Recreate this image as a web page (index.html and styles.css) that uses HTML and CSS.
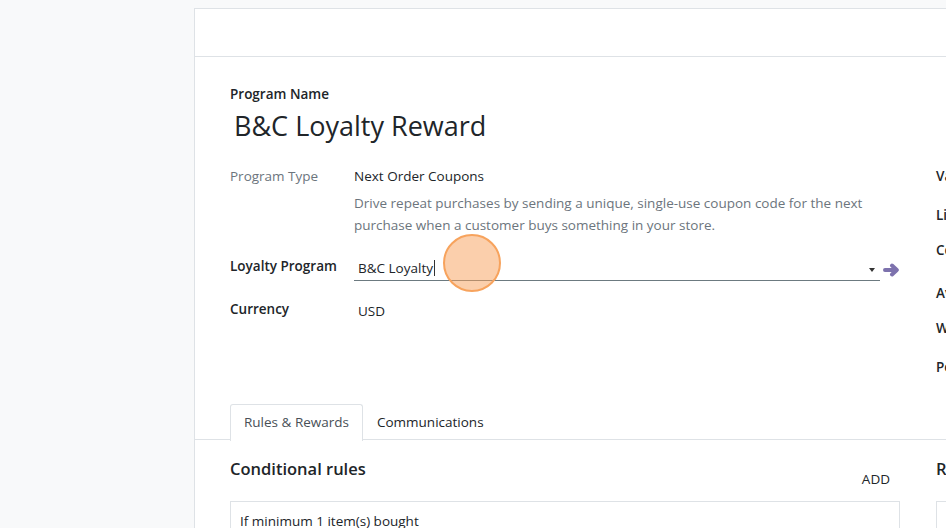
FILE: index.html
```html
<!DOCTYPE html>
<html>
<head>
<meta charset="utf-8">
<link rel="stylesheet" href="styles.css">
</head>
<body>
<div class="page">
  <div class="sheet">
    <div class="sheet-head"></div>
    <div class="sheet-body">
      <div class="name-label">Program Name</div>
      <div class="title">B&amp;C Loyalty Reward</div>
      <div class="groups">
        <div class="group-left">
          <div class="row row-type">
            <div class="lbl lbl-muted">Program Type</div>
            <div class="val">
              <div>Next Order Coupons</div>
              <div class="desc">Drive repeat purchases by sending a unique, single-use coupon code for the next purchase when a customer buys something in your store.</div>
            </div>
          </div>
          <div class="row row-loyalty">
            <div class="lbl">Loyalty Program</div>
            <div class="val val-input">
              <div class="input">
                <span class="input-text">B&amp;C Loyalty</span><span class="caret-cursor"></span>
                <span class="dd"></span>
              </div>
              <svg class="ext" width="18" height="14" viewBox="0 0 18 14"><path d="M2 7h11.5M9 2.5l4.8 4.5-4.8 4.5" fill="none" stroke="#7d72ad" stroke-width="4" stroke-linecap="round" stroke-linejoin="round"/></svg>
            </div>
          </div>
          <div class="row row-cur">
            <div class="lbl">Currency</div>
            <div class="val val-pad">USD</div>
          </div>
        </div>
        <div class="group-right">
          <div class="rlbl r1">Validity</div>
          <div class="rlbl r2">Limit Usage</div>
          <div class="rlbl r3">Company</div>
          <div class="rlbl r4">Available On</div>
          <div class="rlbl r5">Website</div>
          <div class="rlbl r6">Pe</div>
        </div>
      </div>
      <div class="tabs">
        <div class="tab active">Rules &amp; Rewards</div>
        <div class="tab">Communications</div>
      </div>
      <div class="panes">
        <div class="pane-left">
          <div class="pane-head">
            <div class="pane-title">Conditional rules</div>
            <div class="add">ADD</div>
          </div>
          <div class="card">If minimum 1 item(s) bought</div>
        </div>
        <div class="pane-right">
          <div class="pane-head">
            <div class="pane-title">Rewards</div>
          </div>
          <div class="card"></div>
        </div>
      </div>
    </div>
  </div>
  <div class="click-dot"></div>
</div>
</body>
</html>
```

FILE: styles.css
```css
html, body {
  margin: 0;
  padding: 0;
  width: 946px;
  height: 528px;
  overflow: hidden;
}
body {
  font-family: "Open Sans", "Noto Sans", sans-serif;
  font-size: 13.5px;
  color: #212529;
  background: #f8f9fa;
}
.page {
  position: relative;
  padding: 8px 0 0 194px;
  height: 520px;
}
.sheet {
  width: 1100px;
  height: 520px;
  background: #fff;
  border-left: 1px solid #dee2e6;
  border-top: 1px solid #dee2e6;
}
.sheet-head {
  height: 47px;
  border-bottom: 1px solid #dee2e6;
}
.sheet-body {
  padding: 27px 0 0 35px;
}
.name-label {
  font-weight: 600;
  line-height: 20px;
  height: 20px;
}
.title {
  margin-top: 4px;
  padding-left: 4px;
  font-size: 27px;
  line-height: 36px;
  height: 36px;
}
.groups {
  display: flex;
  margin-top: 22px;
  height: 211px;
}
.group-left {
  width: 672px;
}
.group-right {
  margin-left: 34px;
  display: flex;
  flex-direction: column;
}
.row {
  display: flex;
}
.lbl {
  width: 124px;
  flex: none;
  font-weight: 600;
  line-height: 20px;
}
.lbl-muted {
  font-weight: 400;
  color: #6c757d;
}
.val {
  flex: 1;
  line-height: 20px;
}
.desc {
  margin-top: 6px;
  line-height: 22px;
  color: #6c757d;
  width: 530px;
}
.row-loyalty {
  margin-top: 20px;
}
.val-input {
  display: flex;
  align-items: flex-start;
}
.input {
  position: relative;
  width: 522px;
  height: 24px;
  border-bottom: 1px solid #6c7a80;
  padding-left: 4px;
  display: flex;
  align-items: center;
}
.input-text {
  line-height: 20px;
}
.caret-cursor {
  display: inline-block;
  width: 1px;
  height: 16px;
  background: #333;
  margin-left: 1px;
}
.dd {
  position: absolute;
  right: 5px;
  top: 12px;
  width: 0;
  height: 0;
  border-left: 3.5px solid transparent;
  border-right: 3.5px solid transparent;
  border-top: 4px solid #333;
}
.ext {
  margin: 7px 0 0 3px;
}
.row-cur {
  margin-top: 18px;
}
.val-pad {
  padding-left: 4px;
  padding-top: 2px;
}
.rlbl {
  font-weight: 600;
  line-height: 20px;
  white-space: nowrap;
}
.r2 { margin-top: 19px; }
.r3 { margin-top: 15px; }
.r4 { margin-top: 23px; }
.r5 { margin-top: 15px; }
.r6 { margin-top: 19px; }
.tabs {
  display: flex;
  margin-top: 27px;
  margin-left: -35px;
  padding-left: 35px;
  border-bottom: 1px solid #dee2e6;
  height: 35px;
}
.tab {
  padding: 0 13px;
  line-height: 35px;
  height: 35px;
  border: 1px solid transparent;
  border-bottom: none;
  color: #212529;
}
.tab.active {
  border-color: #dee2e6;
  border-radius: 3px 3px 0 0;
  color: #495057;
  background: #fff;
  height: 36px;
}
.panes {
  display: flex;
  margin-top: 17px;
}
.pane-left {
  width: 670px;
}
.pane-right {
  margin-left: 36px;
  width: 300px;
}
.pane-head {
  display: flex;
  justify-content: space-between;
  height: 44px;
}
.pane-title {
  font-size: 16.5px;
  font-weight: 600;
  line-height: 24px;
}
.add {
  margin-top: 12px;
  padding-right: 10px;
  line-height: 20px;
}
.card {
  border: 1px solid #dee2e6;
  height: 60px;
  padding: 9px 9px;
  line-height: 20px;
}
.click-dot {
  position: absolute;
  left: 443px;
  top: 234px;
  width: 54px;
  height: 54px;
  border-radius: 50%;
  border: 2px solid #f7a35d;
  background: rgba(248, 160, 90, 0.5);
}
```
